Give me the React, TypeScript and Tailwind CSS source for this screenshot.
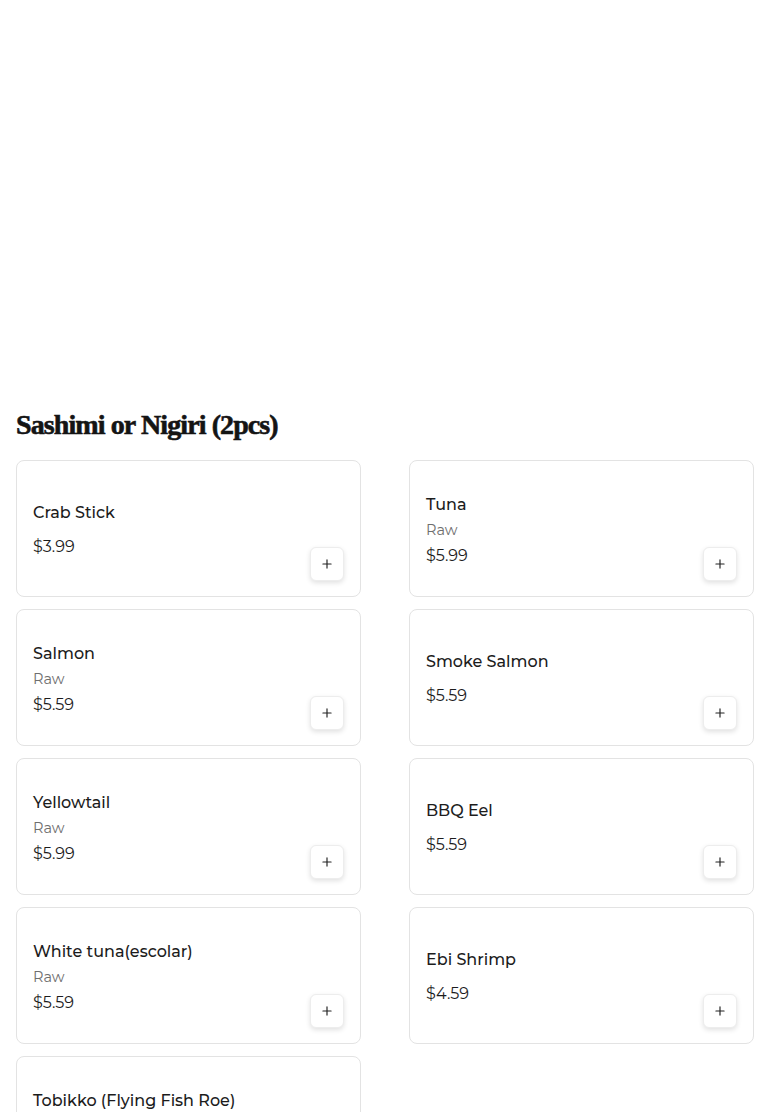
import { Plus } from "lucide-react";

type Item = { name: string; note?: string; price: string };

const items: Item[] = [
  { name: "Crab Stick", price: "$3.99" },
  { name: "Tuna", note: "Raw", price: "$5.99" },
  { name: "Salmon", note: "Raw", price: "$5.59" },
  { name: "Smoke Salmon", price: "$5.59" },
  { name: "Yellowtail", note: "Raw", price: "$5.99" },
  { name: "BBQ Eel", price: "$5.59" },
  { name: "White tuna(escolar)", note: "Raw", price: "$5.59" },
  { name: "Ebi Shrimp", price: "$4.59" },
  { name: "Tobikko (Flying Fish Roe)", note: "Raw", price: "$5.59" },
];

function ItemCard({ item }: { item: Item }) {
  return (
    <div className="flex h-[137px] items-center justify-between rounded-lg border border-[#e3e3e3] bg-white px-4 pb-[15px] pt-4">
      <div className="flex flex-col pt-[2px]">
        <p className="text-[16px] font-medium leading-6 text-[#1c1c1c]">{item.name}</p>
        {item.note && <p className="mt-[1px] text-[14.5px] leading-6 text-[#6e6e6e]">{item.note}</p>}
        <p className={`text-[16px] leading-6 text-[#1c1c1c] ${item.note ? "mt-[2px]" : "mt-[10px]"}`}>{item.price}</p>
      </div>
      <button className="flex h-[34px] w-[34px] shrink-0 items-center justify-center self-end rounded-md border border-[#ededed] bg-white shadow-[0_2px_5px_rgba(0,0,0,0.12)]">
        <Plus size={14} strokeWidth={2} className="text-[#222]" />
      </button>
    </div>
  );
}

export default function App() {
  return (
    <div className="min-h-screen bg-white font-['Montserrat','Open_Sans',sans-serif]">
      <div className="h-[406px]" />
      <section className="px-4">
        <h2 className="mb-[16px] font-['Liberation_Serif',serif] text-[28px] font-black leading-[38px] tracking-[-0.9px] text-[#141414] [-webkit-text-stroke:0.6px_#141414]">
          Sashimi or Nigiri (2pcs)
        </h2>
        <div className="grid grid-cols-2 gap-x-12 gap-y-3">
          {items.map((it) => (
            <ItemCard key={it.name} item={it} />
          ))}
        </div>
      </section>
    </div>
  );
}
